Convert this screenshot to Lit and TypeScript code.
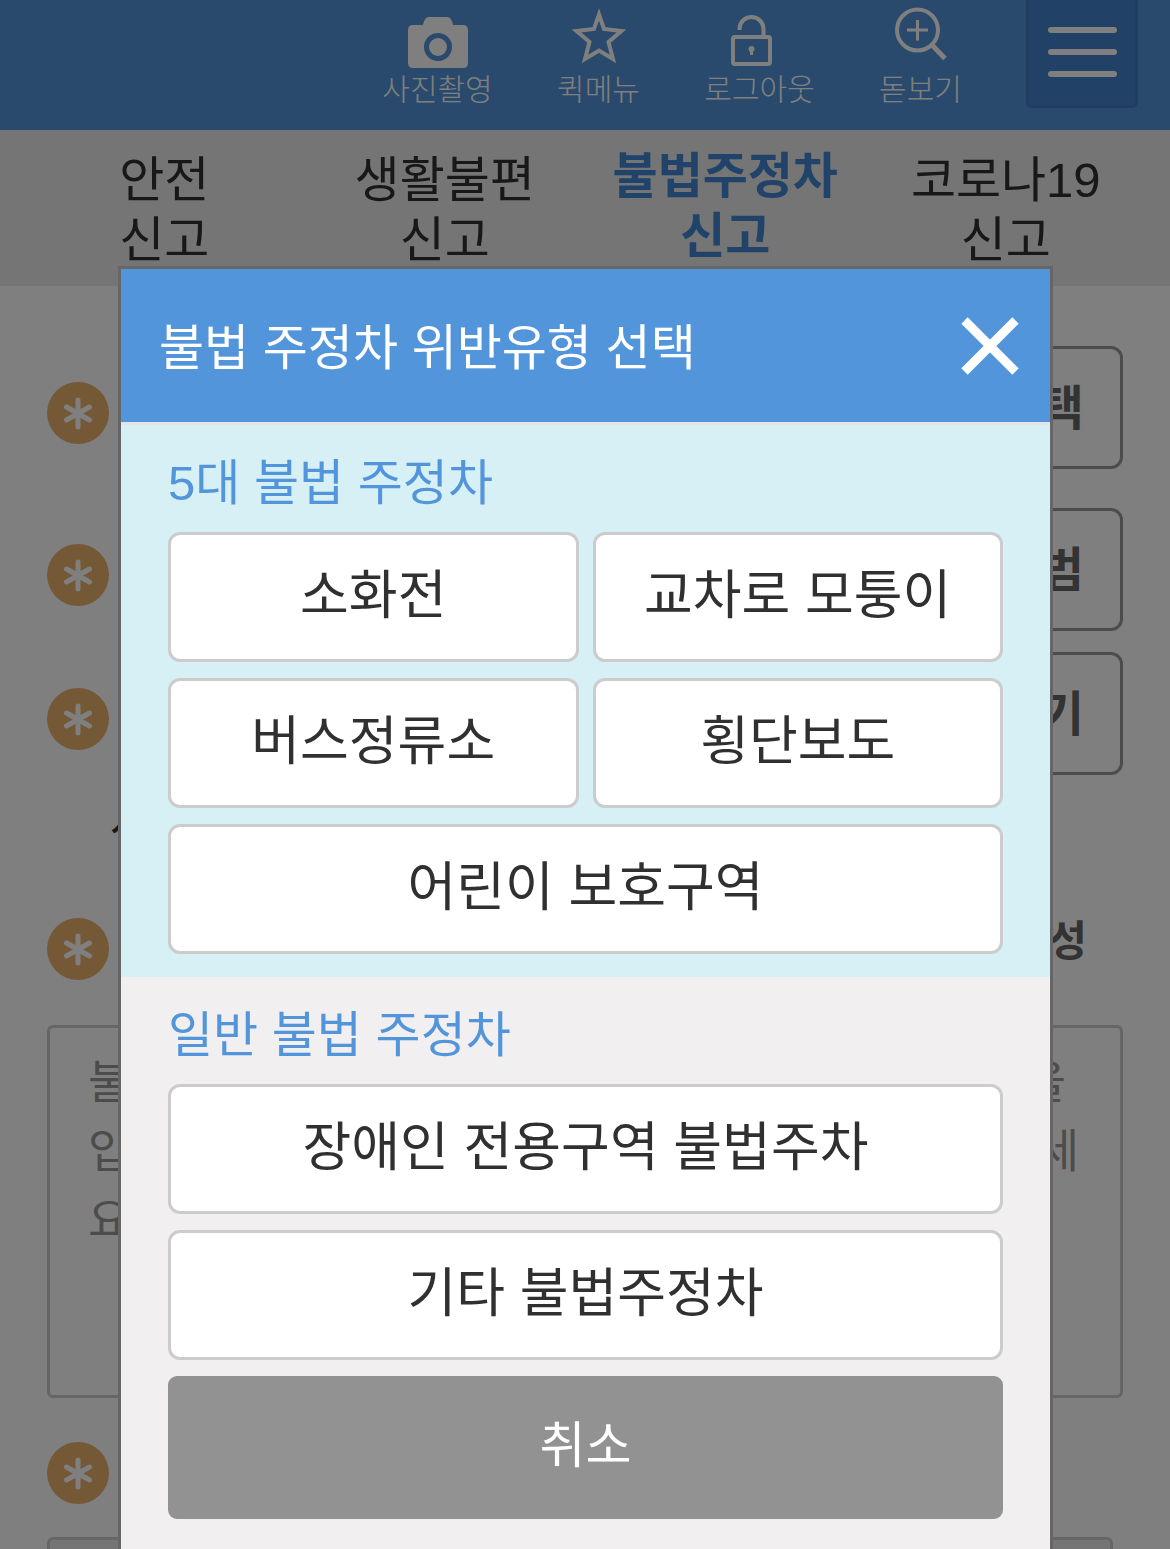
import { LitElement, html, svg, css } from "lit";
import { customElement } from "lit/decorators.js";

const cameraIcon = svg`
  <path fill="currentColor" fill-rule="evenodd" d="M7 25H17Q18.500 17 23 17H41Q45.500 17 47 25H57Q62 25 62 30V63Q62 68 57 68H7Q2 68 2 63V30Q2 25 7 25ZM32 33A14 14 0 1 0 32 61A14 14 0 1 0 32 33Z"/>
  <circle cx="32" cy="47" r="9" fill="currentColor"/>`;

const starIcon = svg`
  <path fill="none" stroke="currentColor" stroke-width="4" stroke-miterlimit="10" d="M32 14.500L37 29L54.500 31L41.500 42L46 59L32 50.500L18 59L22.500 42L9.500 31L27 29Z"/>`;

const lockIcon = svg`
  <rect x="5" y="37" width="37" height="27" rx="2" fill="none" stroke="currentColor" stroke-width="4"/>
  <path d="M11.500 30V29A12 12 0 0 1 35.500 29V37" fill="none" stroke="currentColor" stroke-width="4"/>
  <circle cx="23.500" cy="49" r="3" fill="currentColor"/>
  <path d="M23.500 49V55" stroke="currentColor" stroke-width="3"/>`;

const magnifierIcon = svg`
  <circle cx="28.500" cy="30" r="20.500" fill="none" stroke="currentColor" stroke-width="4"/>
  <path d="M18 30H39M28.500 20V40.500" stroke="currentColor" stroke-width="3"/>
  <path d="M42.500 44.500L56 58.500" stroke="currentColor" stroke-width="5"/>`;

const tools = [
  { label: "사진촬영", icon: cameraIcon },
  { label: "퀵메뉴", icon: starIcon },
  { label: "로그아웃", icon: lockIcon },
  { label: "돋보기", icon: magnifierIcon },
];

const tabs = [
  { lines: ["안전", "신고"], active: false },
  { lines: ["생활불편", "신고"], active: false },
  { lines: ["불법주정차", "신고"], active: true },
  { lines: ["코로나19", "신고"], active: false },
];

const fontStack = css`"Liberation Sans", "Noto Sans CJK KR", sans-serif`;

@customElement("required-mark")
export class RequiredMark extends LitElement {
  static styles = css`
    :host { display: block; flex: none; width: 62px; height: 62px; }
    .mark { display: block; width: 100%; height: 100%; }
  `;
  render() {
    return html`<svg class="mark" viewBox="0 0 62 62" aria-hidden="true">
      <circle cx="31" cy="31" r="31" fill="#eab26e"/>
      <path d="M31 18V45M19.500 25L42.500 38M42.500 25L19.500 38" stroke="#fff" stroke-width="5" stroke-linecap="round"/>
    </svg>`;
  }
}

@customElement("report-page")
export class ReportPage extends LitElement {
  static styles = css`
    :host { display: block; font-family: ${fontStack}; color: #303030; background: #fff; }
    * { box-sizing: border-box; }
    button { font-family: inherit; cursor: pointer; }
    .header { display: flex; justify-content: flex-end; align-items: flex-start; height: 130px; padding-right: 32px; background: #5294d9; }
    .tools { display: flex; margin-right: 25px; }
    .tool { display: flex; flex-direction: column; align-items: center; width: 161px; padding: 0; border: 0; background: none; color: #fff; font-size: 30px; font-weight: 300; line-height: 36px; }
    .tool-icon { display: block; width: 64px; height: 72px; }
    .menu { display: flex; flex-direction: column; align-items: center; gap: 16px; width: 112px; height: 108px; padding: 27px 0 0; border: 3px solid #3e7cc0; border-top: 0; border-radius: 0 0 6px 6px; background: #4282cc; }
    .bar { width: 69px; height: 6px; border-radius: 3px; background: #fff; }
    .tabs { display: grid; grid-template-columns: repeat(4, 1fr); padding: 20px 24px 16px; background: #eaeaea; }
    .tab { height: 120px; display: flex; flex-direction: column; align-items: center; color: inherit; text-decoration: none; font-size: 49px; line-height: 60px; }
    .tabs .active { margin-top: -4px; color: #4286d4; font-weight: 700; }
    .form { padding: 60px 47px 0; }
    .row { display: flex; align-items: center; justify-content: space-between; }
    .row required-mark { margin-top: 10px; }
    .pick { width: 420px; height: 123px; padding: 0 36px 8px; border: 3px solid #999; border-radius: 12px; background: #fff; color: #666; font-size: 48px; font-weight: 700; text-align: right; }
    .first { margin-bottom: 39px; }
    .second { margin-bottom: 21px; }
    .note { margin: 24px 0 0 63px; font-size: 46px; line-height: 46px; }
    .heading { height: 62px; margin: 73px 0 45px; }
    .heading required-mark, .last required-mark { margin-top: 0; }
    .write { padding: 0 36px 24px; border: 0; background: none; color: #666; font-size: 42px; font-weight: 700; }
    .content { display: block; width: 100%; height: 373px; padding: 20px 38px; border: 3px solid #ccc; border-radius: 6px; resize: none; overflow: hidden; background: #fff; color: #999; font-family: inherit; font-size: 46px; line-height: 69px; white-space: pre; }
    .content::placeholder { color: #999; }
    .last { margin: 44px 0 33px; }
    .field { display: block; width: calc(100% - 10px); height: 123px; border: 3px solid #ccc; border-radius: 6px; background: #eaeaea; }
  `;
  render() {
    return html`
      <header class="header">
        <div class="tools">
          ${tools.map(t => html`<button class="tool" type="button">
            <svg class="tool-icon" viewBox="0 0 64 72" aria-hidden="true">${t.icon}</svg>
            <span>${t.label}</span>
          </button>`)}
        </div>
        <button class="menu" type="button" aria-label="메뉴">
          <span class="bar"></span><span class="bar"></span><span class="bar"></span>
        </button>
      </header>
      <nav class="tabs">
        ${tabs.map(t => html`<a href="#" class="tab ${t.active ? "active" : ""}">
          ${t.lines.map(l => html`<span>${l}</span>`)}
        </a>`)}
      </nav>
      <main class="form">
        <div class="row first"><required-mark></required-mark><button class="pick" type="button">선택</button></div>
        <div class="row second"><required-mark></required-mark><button class="pick" type="button">앨범</button></div>
        <div class="row"><required-mark></required-mark><button class="pick" type="button">찾기</button></div>
        <p class="note">사진</p>
        <div class="row heading"><required-mark></required-mark><button class="write" type="button">작성</button></div>
        <textarea class="content" aria-label="내용" placeholder=${"불법주정차 위반 차량의 번호와 발생 장소 등 내용을\n입력 또는 수정한 후 신고 버튼을 눌러 제출하여 주세\n요"}></textarea>
        <div class="row last"><required-mark></required-mark></div>
        <input class="field" type="text" aria-label="차량번호">
      </main>`;
  }
}

@customElement("violation-dialog")
export class ViolationDialog extends LitElement {
  static styles = css`
    :host { display: block; font-family: ${fontStack}; border: 3px solid #666; }
    * { box-sizing: border-box; }
    button { font-family: inherit; cursor: pointer; }
    .top { display: flex; align-items: center; justify-content: space-between; height: 156px; padding: 0 32px 0 38px; border-bottom: 3px solid #e3e6e9; background: #5295db; color: #fff; }
    .title { margin: 0; padding-top: 4px; font-size: 49px; font-weight: 400; line-height: 66px; }
    .close { padding: 0; border: 0; background: none; color: #fff; }
    .cross { display: block; width: 56px; height: 58px; overflow: visible; }
    .group { padding: 25px 47px 48px; background: #f1eff0; }
    .major { padding-bottom: 23px; background: #d7f0f5; }
    .name { margin: 0 0 16px; color: #5295db; font-size: 49px; font-weight: 400; line-height: 66px; }
    .options { display: grid; grid-template-columns: 1fr 1fr; gap: 16px 14px; }
    .option { height: 130px; padding: 0 0 13px; border: 3px solid #ccc; border-radius: 12px; background: #fff; color: #303030; font-size: 53px; }
    .wide { grid-column: span 2; }
    .cancel { grid-column: span 2; height: 143px; padding: 0 0 13px; border: 0; border-radius: 9px; background: #929292; color: #fff; font-size: 50px; }
  `;
  render() {
    return html`
      <div class="top">
        <h1 class="title">불법 주정차 위반유형 선택</h1>
        <button class="close" type="button" aria-label="닫기">
          <svg class="cross" viewBox="0 0 56 58" aria-hidden="true"><path d="M2.500 3.500L53.500 54.500M53.500 3.500L2.500 54.500" stroke="currentColor" stroke-width="9"/></svg>
        </button>
      </div>
      <section class="group major">
        <h2 class="name">5대 불법 주정차</h2>
        <div class="options">
          <button class="option" type="button">소화전</button>
          <button class="option" type="button">교차로 모퉁이</button>
          <button class="option" type="button">버스정류소</button>
          <button class="option" type="button">횡단보도</button>
          <button class="option wide" type="button">어린이 보호구역</button>
        </div>
      </section>
      <section class="group">
        <h2 class="name">일반 불법 주정차</h2>
        <div class="options">
          <button class="option wide" type="button">장애인 전용구역 불법주차</button>
          <button class="option wide" type="button">기타 불법주정차</button>
          <button class="cancel" type="button">취소</button>
        </div>
      </section>`;
  }
}

@customElement("app-root")
export class AppRoot extends LitElement {
  static styles = css`
    :host { display: block; position: relative; height: 100vh; overflow: hidden; background: #fff; }
    .shade { position: absolute; inset: 0; background: rgba(0, 0, 0, 0.5); }
    .dialog { position: absolute; top: 266px; left: 118px; right: 117px; }
  `;
  render() {
    return html`
      <report-page></report-page>
      <div class="shade"></div>
      <violation-dialog class="dialog" role="dialog" aria-modal="true"></violation-dialog>`;
  }
}
